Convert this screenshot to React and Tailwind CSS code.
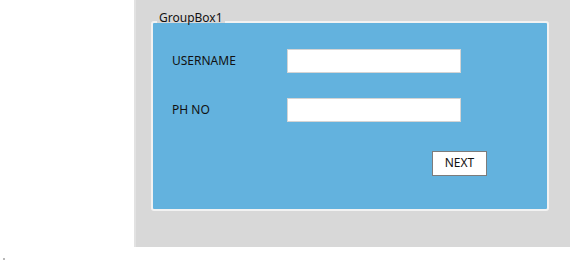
import React from "react";

const Field = ({ label }) => (
  <div className="flex items-center h-[24px]">
    <span className="w-[115px] text-[12px] text-[#111]">{label}</span>
    <input
      type="text"
      className="w-[174px] h-[24px] bg-white border border-[#d4d4d4] outline-none"
    />
  </div>
);

const App = () => {
  return (
    <div
      className="w-[570px] h-[263px] flex bg-white"
      style={{ fontFamily: '"Noto Sans", "Open Sans", sans-serif' }}
    >
      {/* left blank column */}
      <div className="w-[134px] h-full flex flex-col justify-end">
        <div className="ml-[3px] mb-[3px] w-[2px] h-[2px] bg-[#b8b8b8]" />
      </div>

      {/* form panel */}
      <div className="w-[436px] h-[247px] bg-[#d8d8d8] border-l-2 border-[#e2e2e2] pt-[21px] pl-[15px]">
        <div className="relative w-[398px] h-[190px] bg-[#63b2de] border-2 border-[#f2f2f2] rounded-[3px] pl-[19px] pt-[26px]">
          <span className="absolute left-[4px] top-[-8px] h-[8px] px-[2px] bg-[#d8d8d8] text-[12px] leading-[8px] text-[#111]">
            <span className="relative top-[-1px]">GroupBox1</span>
          </span>

          <div className="flex flex-col gap-[25px]">
            <Field label="USERNAME" />
            <Field label="PH NO" />
          </div>

          <div className="mt-[27px] ml-[260px]">
            <button className="w-[55px] h-[25px] bg-white border border-[#7c7c7c] text-[12px] text-[#111]">
              NEXT
            </button>
          </div>
        </div>
      </div>
    </div>
  );
};

export default App;
